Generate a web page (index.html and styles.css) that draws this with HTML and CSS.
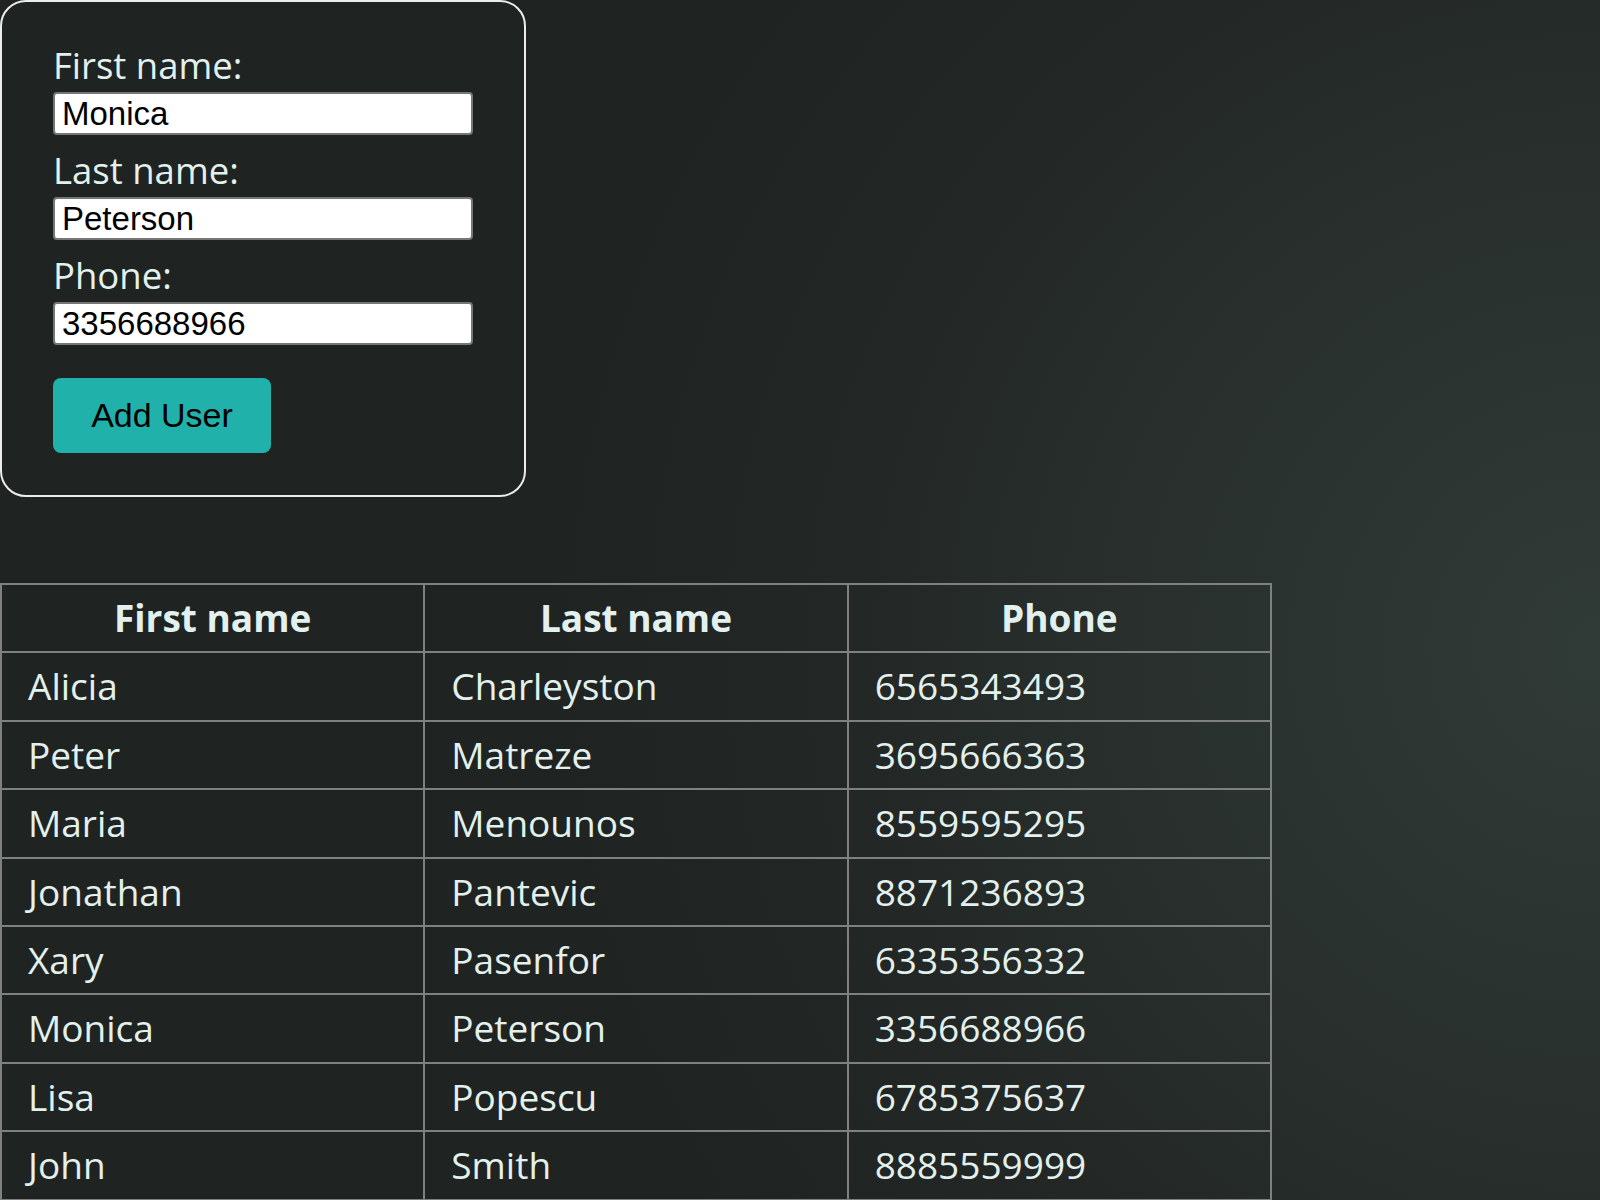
FILE: index.html
```html
<!DOCTYPE html>
<html lang="en">
<head>
<meta charset="utf-8">
<title>Users</title>
<link rel="stylesheet" href="styles.css">
</head>
<body>
<form class="card">
  <label class="field-label" for="fname">First name:</label>
  <input class="field-input" id="fname" type="text" value="Monica">
  <label class="field-label" for="lname">Last name:</label>
  <input class="field-input" id="lname" type="text" value="Peterson">
  <label class="field-label" for="phone">Phone:</label>
  <input class="field-input" id="phone" type="text" value="3356688966">
  <button class="add-btn" type="button">Add User</button>
</form>

<table class="users">
  <thead>
    <tr><th>First name</th><th>Last name</th><th>Phone</th></tr>
  </thead>
  <tbody>
    <tr><td>Alicia</td><td>Charleyston</td><td>6565343493</td></tr>
    <tr><td>Peter</td><td>Matreze</td><td>3695666363</td></tr>
    <tr><td>Maria</td><td>Menounos</td><td>8559595295</td></tr>
    <tr><td>Jonathan</td><td>Pantevic</td><td>8871236893</td></tr>
    <tr><td>Xary</td><td>Pasenfor</td><td>6335356332</td></tr>
    <tr><td>Monica</td><td>Peterson</td><td>3356688966</td></tr>
    <tr><td>Lisa</td><td>Popescu</td><td>6785375637</td></tr>
    <tr><td>John</td><td>Smith</td><td>8885559999</td></tr>
  </tbody>
</table>
</body>
</html>
```

FILE: styles.css
```css
html {
  min-height: 100%;
  background: radial-gradient(circle 1050px at 100% 54%, #303a36 0%, #2a322f 35%, #232826 70%, #1f2321 100%);
  background-color: #1f2321;
}

body {
  margin: 0;
  font-family: "Open Sans", "Noto Sans", sans-serif;
  color: #e3f1ee;
}

.card {
  box-sizing: border-box;
  width: 526px;
  display: flex;
  flex-direction: column;
  align-items: flex-start;
  padding: 37px 51px 42px;
  border: 2px solid #ececec;
  border-radius: 26px;
}

.field-label {
  display: block;
  font-size: 36.5px;
  line-height: 49px;
  padding-top: 2px;
  margin-bottom: 2px;
}

.field-input {
  box-sizing: border-box;
  width: 420px;
  height: 43px;
  margin: 0 0 9px;
  padding: 0 7px;
  font-family: "Liberation Sans", Arial, sans-serif;
  font-size: 33px;
  color: #000;
  background: #fff;
  border: 2px solid #767676;
  border-radius: 4px;
}

.add-btn {
  margin-top: 24px;
  width: 218px;
  height: 75px;
  border: none;
  border-radius: 8px;
  background: #20b2aa;
  color: #000;
  font-family: "Liberation Sans", Arial, sans-serif;
  font-size: 34px;
  cursor: pointer;
}

.users {
  margin-top: 86px;
  width: 1272px;
  table-layout: fixed;
  border-collapse: collapse;
  border: 2px solid #808080;
  font-size: 37px;
}

.users th,
.users td {
  border: 2px solid #808080;
  padding: 8px 26px;
  line-height: 50.4px;
  text-align: left;
  font-weight: 400;
}

.users th {
  text-align: center;
  font-weight: 700;
}
```
